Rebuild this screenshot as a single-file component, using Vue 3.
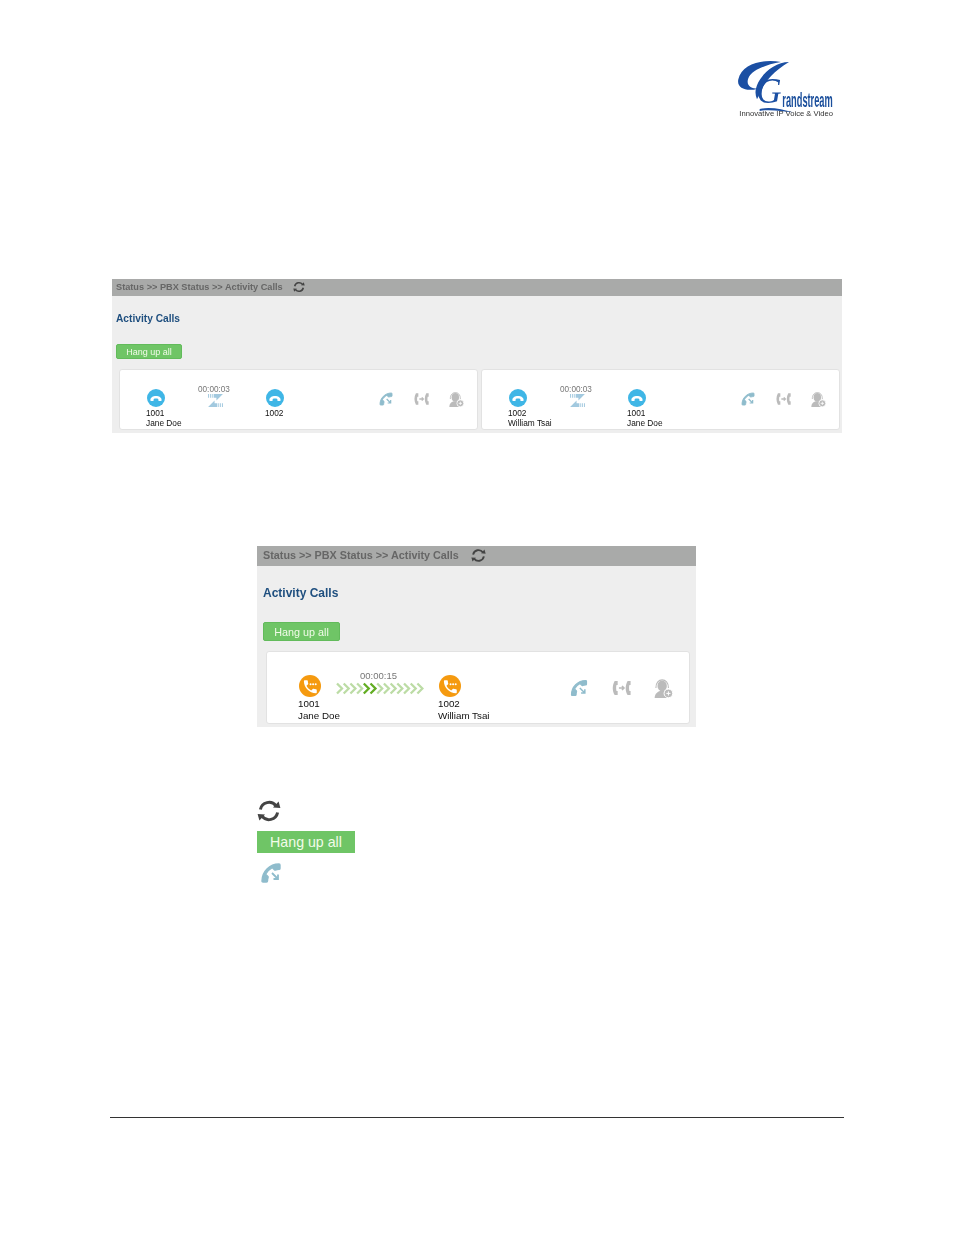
<template>
  <div class="page">
    <svg class="logo" viewBox="50 30 300 180">
      <path class="logo-swoosh" d="M182 36 C130 26 64 40 54 88 C48 114 78 126 112 116 C92 116 76 106 84 85 C94 60 136 44 182 36 Z" />
      <path class="logo-swoosh" d="M206 36 C164 36 122 72 110 106 C104 122 104 134 110 148 L124 120 C132 96 164 60 206 36 Z" />
      <path class="logo-swoosh" d="M118 177 C150 170 186 178 218 187 C186 185 150 177 118 183 Z" />
      <text class="logo-g" x="146" y="160">G</text>
      <text class="logo-name" transform="translate(186 172) scale(1 2.15)">randstream</text>
      <text class="logo-tag" x="57" y="197" textLength="281" lengthAdjust="spacingAndGlyphs">Innovative IP Voice &amp; Video</text>
    </svg>

    <section class="panel panel-sm">
      <div class="crumb">
        <span>Status &gt;&gt; PBX Status &gt;&gt; Activity Calls</span>
        <svg class="refresh" viewBox="0 0 24 24"><use href="#ic-refresh" /></svg>
      </div>
      <div class="panel-body">
        <div class="title">Activity Calls</div>
        <button class="hangup">Hang up all</button>
        <div class="cards">
          <div v-for="call in ringingCalls" :key="call.from.num" class="card">
            <div class="call">
              <div class="party">
                <svg class="avatar" viewBox="0 0 24 24"><use href="#ic-ringing" /></svg>
                <div>{{ call.from.num }}</div>
                <div>{{ call.from.name }}</div>
              </div>
              <div class="link">
                <div class="timer">{{ call.time }}</div>
                <svg class="swap" viewBox="0 0 16 14"><use href="#ic-swap" /></svg>
              </div>
              <div class="party">
                <svg class="avatar" viewBox="0 0 24 24"><use href="#ic-ringing" /></svg>
                <div>{{ call.to.num }}</div>
                <div>{{ call.to.name }}</div>
              </div>
            </div>
            <div class="actions">
              <svg viewBox="0 0 24 24"><use href="#ic-transfer" /></svg>
              <svg viewBox="0 0 24 24"><use href="#ic-attended" /></svg>
              <svg viewBox="0 0 24 24"><use href="#ic-spy" /></svg>
            </div>
          </div>
        </div>
      </div>
    </section>

    <section class="panel panel-lg">
      <div class="crumb">
        <span>Status &gt;&gt; PBX Status &gt;&gt; Activity Calls</span>
        <svg class="refresh" viewBox="0 0 24 24"><use href="#ic-refresh" /></svg>
      </div>
      <div class="panel-body">
        <div class="title">Activity Calls</div>
        <button class="hangup">Hang up all</button>
        <div class="cards">
          <div class="card">
            <div class="call">
              <div class="party">
                <svg class="avatar" viewBox="0 0 24 24"><use href="#ic-talking" /></svg>
                <div>1001</div>
                <div>Jane Doe</div>
              </div>
              <div class="link">
                <div class="timer">00:00:15</div>
                <svg class="chevrons" viewBox="0 0 88 13">
                  <path
                    v-for="n in 13"
                    :key="n"
                    :class="{ on: n === 5 || n === 6 }"
                    :d="`M${(n - 1) * 6.7 + 1} 1.5 l5 5 l-5 5`"
                  />
                </svg>
              </div>
              <div class="party">
                <svg class="avatar" viewBox="0 0 24 24"><use href="#ic-talking" /></svg>
                <div>1002</div>
                <div>William Tsai</div>
              </div>
            </div>
            <div class="actions">
              <svg viewBox="0 0 24 24"><use href="#ic-transfer" /></svg>
              <svg viewBox="0 0 24 24"><use href="#ic-attended" /></svg>
              <svg viewBox="0 0 24 24"><use href="#ic-spy" /></svg>
            </div>
          </div>
        </div>
      </div>
    </section>

    <div class="legend">
      <svg class="legend-refresh" viewBox="0 0 24 24"><use href="#ic-refresh" /></svg>
      <div class="legend-btn">Hang up all</div>
      <svg class="legend-phone" viewBox="0 0 24 24"><use href="#ic-transfer" /></svg>
    </div>

    <div class="footer-line"></div>

    <!-- shared icons -->
    <svg class="defs" width="0" height="0">
      <defs>
        <g id="ic-refresh">
          <path d="M3.4 10.5 A8.8 8.8 0 0 1 19 6.8" fill="none" stroke="#444" stroke-width="3" />
          <path d="M16 8.4 L23.4 9 L21.6 2.4 Z" fill="#444" />
          <path d="M20.6 13.5 A8.8 8.8 0 0 1 5 17.2" fill="none" stroke="#444" stroke-width="3" />
          <path d="M8 15.6 L0.6 15 L2.4 21.6 Z" fill="#444" />
        </g>
        <g id="ic-ringing">
          <circle cx="12" cy="12" r="12" fill="#3fb6e6" />
          <path d="M4.5 15 C4.2 7.6 19.8 7.6 19.5 15 C19.5 15.8 19 16 18.4 16 H16 C15.4 16 15.1 15.6 15.1 15 V13.2 C13.2 12.4 10.8 12.4 8.9 13.2 V15 C8.9 15.6 8.6 16 8 16 H5.6 C5 16 4.5 15.8 4.5 15 Z" fill="#fff" />
        </g>
        <g id="ic-talking">
          <circle cx="12" cy="12" r="12" fill="#f59a0f" />
          <path transform="translate(3 3.4) scale(.78)" d="M6.6 10.8c1.4 2.8 3.8 5.1 6.6 6.6l2.2-2.2c.3-.3.7-.4 1-.2 1.1.4 2.3.6 3.6.6.6 0 1 .4 1 1V20c0 .6-.4 1-1 1C10.6 21 3 13.4 3 4c0-.6.4-1 1-1h3.5c.6 0 1 .4 1 1 0 1.3.2 2.5.6 3.6.1.3 0 .7-.2 1l-2.3 2.2z" fill="#fff" />
          <circle cx="12.6" cy="10" r="1.1" fill="#fff" />
          <circle cx="15.4" cy="10" r="1.1" fill="#fff" />
          <circle cx="18.2" cy="10" r="1.1" fill="#fff" />
        </g>
        <g id="ic-swap">
          <path d="M0 0h1v4H0zM2 0h1v4H2zM4 0h1v4H4zM6 0h10l-7 7V4H6z" fill="#a2c9df" />
          <path d="M16 14h-1v-4h1zM14 14h-1v-4h1zM12 14h-1v-4h1zM10 14H0l7-7v3h3z" fill="#a2c9df" />
        </g>
        <g id="ic-transfer">
          <path transform="translate(0 24) scale(1 -1)" d="M6.6 10.8c1.4 2.8 3.8 5.1 6.6 6.6l2.2-2.2c.3-.3.7-.4 1-.2 1.1.4 2.3.6 3.6.6.6 0 1 .4 1 1V20c0 .6-.4 1-1 1C10.6 21 3 13.4 3 4c0-.6.4-1 1-1h3.5c.6 0 1 .4 1 1 0 1.3.2 2.5.6 3.6.1.3 0 .7-.2 1l-2.3 2.2z" fill="#8fbccc" stroke="#8fbccc" stroke-width="1.4" />
          <path d="M13 12 L19 18 M19 13.5 V18 H14.5" fill="none" stroke="#8fbccc" stroke-width="1.8" />
        </g>
        <g id="ic-attended">
          <path d="M8 3.5 H4.4 C1.4 8.5 1.4 15.5 4.4 20.5 H8 V15.5 H6.6 C6 14 6 10 6.6 8.5 H8 Z" fill="#bbb" />
          <path d="M23.5 3.5 H19.9 C16.9 8.5 16.9 15.5 19.9 20.5 H23.5 V15.5 H22.1 C21.5 14 21.5 10 22.1 8.5 H23.5 Z" fill="#bbb" />
          <path d="M9.5 12 H15.5 M13.2 9.6 L15.6 12 L13.2 14.4" fill="none" stroke="#bbb" stroke-width="1.9" />
        </g>
        <g id="ic-spy">
          <path d="M3.5 12 C3 -1 19 -1 18.5 12" fill="none" stroke="#bbb" stroke-width="1.3" />
          <ellipse cx="11" cy="9.5" rx="5.6" ry="6.6" fill="#bbb" />
          <path d="M2 24 C2 18.5 5.5 16.5 8.5 15.5 H13.5 C16 16.5 18 17.5 18.5 19 V24 Z" fill="#bbb" />
          <circle cx="18.5" cy="18.5" r="5.2" fill="#bbb" stroke="#fff" stroke-width="1.2" />
          <path d="M18.5 16 V21 M16 18.5 H21" stroke="#fff" stroke-width="1.2" />
        </g>
      </defs>
    </svg>
  </div>
</template>

<script setup>
const ringingCalls = [
  {
    time: '00:00:03',
    from: { num: '1001', name: 'Jane Doe' },
    to: { num: '1002', name: '' }
  },
  {
    time: '00:00:03',
    from: { num: '1002', name: 'William Tsai' },
    to: { num: '1001', name: 'Jane Doe' }
  }
];
</script>

<style>
html, body {
  background: #fff;
}
</style>

<style scoped>
.page {
  position: relative;
  width: 954px;
  height: 1235px;
  overflow: hidden;
  padding-top: 60px;
  box-sizing: border-box;
  font-family: "Liberation Sans", Arial, sans-serif;
  color: #111;
}

.defs {
  position: absolute;
}

/* logo */
.logo {
  display: block;
  width: 100px;
  height: 60px;
  margin-left: 737px;
  filter: blur(0.3px);
}
.logo-swoosh {
  fill: #1b4fa3;
}
.logo-g {
  font-family: "Liberation Serif", serif;
  font-style: italic;
  font-size: 105px;
  fill: #1b4fa3;
  text-anchor: middle;
}
.logo-name {
  font-family: "Liberation Sans", sans-serif;
  font-weight: 700;
  font-size: 27.8px;
  fill: #1b4f9c;
}
.logo-tag {
  font-family: "Liberation Sans", sans-serif;
  font-size: 19px;
  fill: #333;
}

/* panels */
.panel {
  background: #eee;
  filter: blur(0.25px);
}
.crumb {
  display: flex;
  align-items: center;
  background: #a9aaa9;
  color: #666;
  font-weight: 700;
}
.crumb span {
  position: relative;
  top: -1px;
}
.title {
  color: #1f4f7f;
  font-weight: 700;
}
.hangup {
  display: block;
  padding: 0;
  background: #6fc566;
  border: 1px solid #62bb5b;
  border-radius: 2px;
  color: #f2fbe9;
  font-family: inherit;
}
.cards {
  display: flex;
  gap: 3px;
}
.card {
  display: flex;
  justify-content: space-between;
  box-sizing: border-box;
  background: #fff;
  border: 1px solid #e2e2e2;
  border-radius: 3px;
}
.call {
  display: flex;
  align-items: flex-start;
}
.party {
  white-space: nowrap;
}
.avatar {
  display: block;
}
.timer {
  color: #777;
}
.actions {
  display: flex;
}
.actions svg {
  display: block;
}

/* smaller shot */
.panel-sm {
  width: 730px;
  margin: 159px 0 0 112px;
}
.panel-sm .crumb {
  height: 17px;
  padding-left: 4px;
  gap: 10px;
  font-size: 9.2px;
}
.panel-sm .refresh {
  width: 12px;
  height: 12px;
  margin-top: -2px;
}
.panel-sm .panel-body {
  padding: 16px 2px 3px 4px;
}
.panel-sm .title {
  height: 14px;
  line-height: 14px;
  font-size: 10.2px;
}
.panel-sm .hangup {
  width: 66px;
  height: 15px;
  margin-top: 18px;
  font-size: 9px;
}
.panel-sm .cards {
  margin: 10px 0 0 3px;
}
.panel-sm .card {
  width: 359px;
  height: 61px;
  padding: 11px 0 0 26px;
}
.panel-sm .party {
  font-size: 8.3px;
  line-height: 10px;
  margin-top: 8px;
}
.panel-sm .party:first-child {
  width: 52px;
}
.panel-sm .avatar {
  width: 18px;
  height: 18px;
  margin: 0 0 1px 1px;
}
.panel-sm .link {
  width: 67px;
}
.panel-sm .timer {
  font-size: 8.2px;
  line-height: 9px;
  margin-top: 4px;
}
.panel-sm .swap {
  display: block;
  width: 17px;
  height: 13px;
  margin: 0 0 0 9px;
}
.panel-sm .actions {
  gap: 19px;
  padding: 10px 13px 0 0;
}
.panel-sm .actions svg {
  width: 16px;
  height: 16px;
}

/* larger shot */
.panel-lg {
  width: 439px;
  margin: 113px 0 0 257px;
}
.panel-lg .crumb {
  height: 20px;
  padding-left: 6px;
  gap: 12px;
  font-size: 10.8px;
}
.panel-lg .refresh {
  width: 15px;
  height: 15px;
  margin-top: -2px;
}
.panel-lg .panel-body {
  padding: 19px 6px 3px 6px;
}
.panel-lg .title {
  height: 16px;
  line-height: 16px;
  font-size: 12px;
}
.panel-lg .hangup {
  width: 77px;
  height: 19px;
  margin-top: 21px;
  font-size: 10.8px;
}
.panel-lg .cards {
  margin: 10px 0 0 3px;
}
.panel-lg .card {
  width: 424px;
  height: 73px;
  padding: 0 0 0 31px;
}
.panel-lg .call {
  padding-top: 23px;
}
.panel-lg .party {
  font-size: 9.8px;
  line-height: 12px;
}
.panel-lg .party:first-child {
  width: 38px;
}
.panel-lg .avatar {
  width: 22px;
  height: 22px;
  margin: 0 0 1px 1px;
}
.panel-lg .link {
  width: 102px;
  margin-top: -4px;
}
.panel-lg .timer {
  font-size: 9.5px;
  line-height: 10px;
  margin-left: 24px;
}
.chevrons {
  display: block;
  width: 88px;
  height: 13px;
  margin-top: 1px;
}
.chevrons path {
  fill: none;
  stroke: #bcdca5;
  stroke-width: 2.3;
}
.chevrons path.on {
  stroke: #62ad22;
}
.panel-lg .actions {
  gap: 22px;
  padding: 26px 16px 0 0;
}
.panel-lg .actions svg {
  width: 20px;
  height: 20px;
}

/* legend icons under the shots */
.legend {
  margin: 72px 0 0 257px;
}
.legend-refresh {
  display: block;
  width: 24px;
  height: 24px;
}
.legend-btn {
  width: 98px;
  height: 22px;
  margin-top: 8px;
  background: #6fc566;
  color: #f2fbe9;
  font-size: 14.2px;
  line-height: 22px;
  text-align: center;
}
.legend-phone {
  display: block;
  width: 24px;
  height: 24px;
  margin: 8px 0 0 2px;
}

.footer-line {
  position: absolute;
  left: 110px;
  top: 1117px;
  width: 734px;
  border-top: 1px solid #333;
}
</style>
